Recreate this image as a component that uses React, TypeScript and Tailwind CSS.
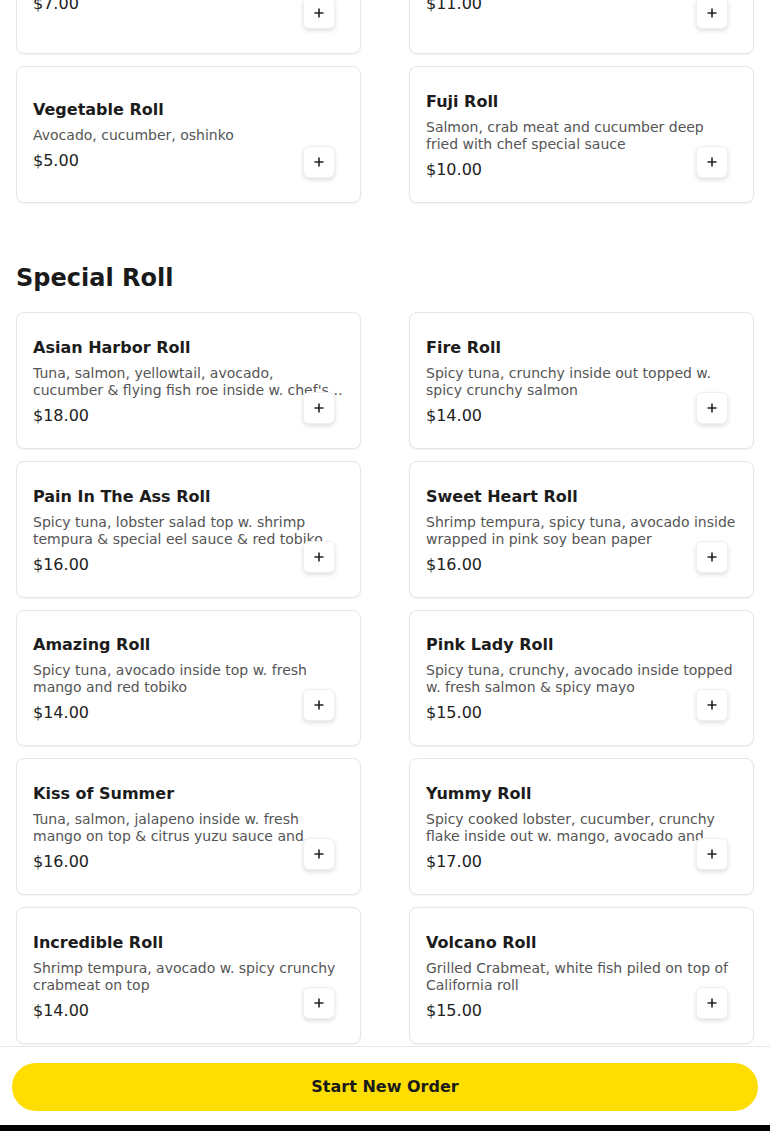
import React from "react";

type Item = { name: string; desc: string; price: string };

const topItems: Item[] = [
  { name: "Salmon Avocado Roll", desc: "", price: "$7.00" },
  { name: "Eel Avocado Roll", desc: "", price: "$11.00" },
  { name: "Vegetable Roll", desc: "Avocado, cucumber, oshinko", price: "$5.00" },
  { name: "Fuji Roll", desc: "Salmon, crab meat and cucumber deep fried with chef special sauce", price: "$10.00" },
];

const specialItems: Item[] = [
  { name: "Asian Harbor Roll", desc: "Tuna, salmon, yellowtail, avocado, cucumber & flying fish roe inside w. chef's special sauce", price: "$18.00" },
  { name: "Fire Roll", desc: "Spicy tuna, crunchy inside out topped w. spicy crunchy salmon", price: "$14.00" },
  { name: "Pain In The Ass Roll", desc: "Spicy tuna, lobster salad top w. shrimp tempura & special eel sauce & red tobiko", price: "$16.00" },
  { name: "Sweet Heart Roll", desc: "Shrimp tempura, spicy tuna, avocado inside wrapped in pink soy bean paper", price: "$16.00" },
  { name: "Amazing Roll", desc: "Spicy tuna, avocado inside top w. fresh mango and red tobiko", price: "$14.00" },
  { name: "Pink Lady Roll", desc: "Spicy tuna, crunchy, avocado inside topped w. fresh salmon & spicy mayo", price: "$15.00" },
  { name: "Kiss of Summer", desc: "Tuna, salmon, jalapeno inside w. fresh mango on top & citrus yuzu sauce and black tobiko", price: "$16.00" },
  { name: "Yummy Roll", desc: "Spicy cooked lobster, cucumber, crunchy flake inside out w. mango, avocado and  mango sauce", price: "$17.00" },
  { name: "Incredible Roll", desc: "Shrimp tempura, avocado w. spicy crunchy crabmeat on top", price: "$14.00" },
  { name: "Volcano Roll", desc: "Grilled Crabmeat, white fish piled on top of California roll", price: "$15.00" },
  { name: "Dragon Roll", desc: "Eel, cucumber inside topped w. avocado and eel sauce", price: "$15.00" },
  { name: "Rainbow Roll", desc: "California roll topped w. assorted fish", price: "$15.00" },
];

function PlusIcon() {
  return (
    <svg width="12" height="12" viewBox="0 0 12 12" fill="none">
      <path d="M6 1.5v9M1.5 6h9" stroke="#222" strokeWidth="1.6" strokeLinecap="butt" />
    </svg>
  );
}

function Card({ item }: { item: Item }) {
  return (
    <div className="relative h-[136.75px] rounded-lg border border-[#e6e6e6] bg-white shadow-[0_1px_2px_rgba(0,0,0,0.05)] px-4 pt-[3px] flex flex-col justify-center">
      <div className="text-[16px] leading-6 font-bold text-[#1c1c1c] mb-[5px]">{item.name}</div>
      {item.desc ? (
        <div className="text-[14px] leading-[17px] text-[#555555] line-clamp-2">{item.desc}</div>
      ) : null}
      <div className="text-[16px] leading-6 text-[#222222] mt-[5px]">{item.price}</div>
      <button className="absolute right-[25px] bottom-6 w-8 h-8 flex items-center justify-center rounded-md bg-white border border-[#efefef] shadow-[0_2px_4px_rgba(0,0,0,0.13)]">
        <PlusIcon />
      </button>
    </div>
  );
}

export default function App() {
  return (
    <div
      className="min-h-screen bg-white overflow-hidden"
      style={{ fontFamily: '"DejaVu Sans", Verdana, sans-serif' }}
    >
      <div className="px-4 pb-[120px]">
        <div className="grid grid-cols-2 gap-x-12 gap-y-3 -mt-[83px]">
          {topItems.map((it) => (
            <Card key={it.name} item={it} />
          ))}
        </div>
        <h2 className="mt-[59.5px] mb-[18px] text-[24px] leading-8 font-bold text-[#1a1a1a]">Special Roll</h2>
        <div className="grid grid-cols-2 gap-x-12 gap-y-3">
          {specialItems.map((it) => (
            <Card key={it.name} item={it} />
          ))}
        </div>
      </div>
      <div className="fixed bottom-0 left-0 right-0 bg-white border-t border-[#e8e8e8]">
        <div className="px-3 pt-4 pb-[14px]">
          <button className="w-full h-12 rounded-full bg-[#FEDD00] text-[16px] font-bold text-[#1a1a1a]">
            Start New Order
          </button>
        </div>
        <div className="h-[6px] bg-black" />
      </div>
    </div>
  );
}
